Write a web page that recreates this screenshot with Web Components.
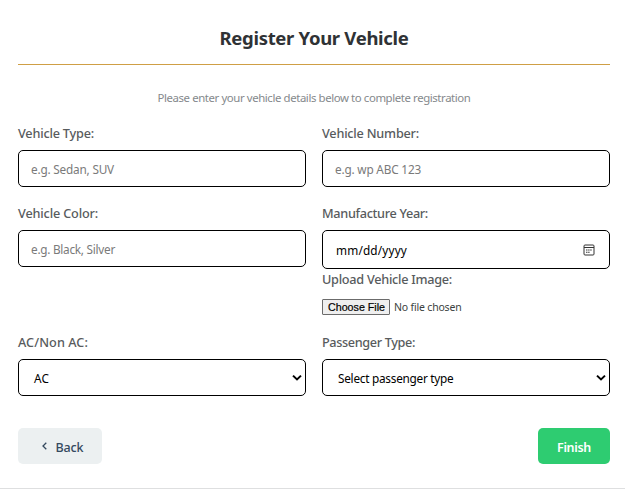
<!DOCTYPE html>
<html lang="en">
<head>
<meta charset="utf-8">
<title>Register Your Vehicle</title>
<style>
body { margin: 0; background: #fff; font-family: "Noto Sans", "Open Sans", sans-serif; }
</style>
</head>
<body>
<vehicle-form></vehicle-form>
<script>
/* Single line of text whose tracking is adjusted to a given width. */
customElements.define('fit-text', class extends HTMLElement {
  connectedCallback() {
    const root = this.attachShadow({ mode: 'open' });
    root.innerHTML = '<style>:host{display:inline-block;white-space:pre}span{display:inline-block}</style><span><slot></slot></span>';
    const span = root.querySelector('span');
    const want = parseFloat(this.getAttribute('width'));
    const have = span.getBoundingClientRect().width;
    const n = this.textContent.length;
    if (want && have) {
      span.style.letterSpacing = ((want - have) / n).toFixed(4) + 'px';
      this.style.width = want + 'px';
    }
  }
});

customElements.define('form-heading', class extends HTMLElement {
  connectedCallback() {
    this.attachShadow({ mode: 'open' }).innerHTML = `
      <style>
        :host { display: block; text-align: center; }
        h2 { margin: 0; height: 40px; padding-top: 24px; border-bottom: 1px solid #cf9f45; font: bold 18.5px/27px "Noto Sans", sans-serif; color: #2f3235; }
        p { margin: 23px 0 0; font: 11.4px/20px "Noto Sans", sans-serif; color: #85898c; }
      </style>
      <h2><fit-text width="189">Register Your Vehicle</fit-text></h2>
      <p><fit-text width="313">Please enter your vehicle details below to complete registration</fit-text></p>`;
  }
});

customElements.define('form-field', class extends HTMLElement {
  connectedCallback() {
    this.attachShadow({ mode: 'open' }).innerHTML = `
      <style>
        :host { display: block; }
        .label { display: block; height: 20px; margin-bottom: 7px; font-size: 12.7px; font-weight: 500; line-height: 20px; color: #585b5d; }
        :host([kind=file]) .label { margin-bottom: 10px; }
      </style>
      <span class="label"><fit-text width="${this.getAttribute('lw')}">${this.getAttribute('label')}</fit-text></span>
      <slot></slot>`;
  }
});

customElements.define('field-box', class extends HTMLElement {
  connectedCallback() {
    const kind = this.getAttribute('kind');
    const icon = {
      date: `<svg style="margin-right:14px" width="12" height="12" viewBox="0 0 12 12" fill="none" stroke="#333"><rect x="1" y="1" width="10" height="10" rx="1"/><path d="M1 3.5h10"/><path d="M3 6h6M3 8.2h4" stroke-width="1.1" stroke-dasharray="1.5 .6"/></svg>`,
      select: `<svg style="margin-right:3px" width="10" height="8" viewBox="0 0 10 8" fill="none" stroke="#000" stroke-width="2"><path d="M1 1.6l4 3.8 4-3.8"/></svg>`
    }[kind] || '';
    this.attachShadow({ mode: 'open' }).innerHTML = `
      <style>
        :host { box-sizing: border-box; display: flex; align-items: center; justify-content: space-between; height: 37px; padding-left: 12px; border: 1px solid #000; border-radius: 5px; background: #fff; font-size: 11.8px; line-height: 18px; color: #7a7a7a; }
        :host([kind=date]) { height: 39px; padding-left: 13px; color: #000; }
        :host([kind=select]) { padding-left: 15px; color: #000; }
        svg { display: block; flex: none; }
      </style>
      <span><slot></slot></span>${icon}`;
  }
});

customElements.define('file-picker', class extends HTMLElement {
  connectedCallback() {
    this.attachShadow({ mode: 'open' }).innerHTML = `
      <style>
        :host { display: flex; height: 16px; align-items: center; gap: 4px; font-size: 10.5px; line-height: 16px; color: #3c3f41; }
        button { box-sizing: border-box; width: 68px; height: 16px; padding: 0 0 0 1px; border: 1px solid #6b6b6b; border-radius: 1px; background: #efefef; font: 10.7px/14px "Liberation Sans", Arial, sans-serif; -webkit-text-stroke: .2px #000; color: #000; }
      </style>
      <button type="button"><fit-text width="57">Choose File</fit-text></button><fit-text width="67.5">No file chosen</fit-text>`;
  }
});

customElements.define('form-button', class extends HTMLElement {
  connectedCallback() {
    this.attachShadow({ mode: 'open' }).innerHTML = `
      <style>
        :host { display: block; }
        button { display: flex; align-items: center; justify-content: center; box-sizing: border-box; width: 72px; height: 36px; padding: 3px 0 0; border: 0; border-radius: 5px; background: #2ecc71; color: #fff; font: 600 12.5px/20px "Noto Sans", sans-serif; }
        :host([kind=back]) button { width: 84px; padding-left: 5px; gap: 9px; background: #ecf0f1; color: #34495e; font-weight: 500; }
        svg { display: block; margin-top: -4px; }
      </style>
      <button type="button">${this.getAttribute('kind') === 'back' ? '<svg width="5" height="8" viewBox="0 0 5 8" fill="none" stroke="#34495e" stroke-width="1.3"><path d="M4.3 .8L1 4l3.3 3.2"/></svg>' : ''}<slot></slot></button>`;
  }
});

customElements.define('vehicle-form', class extends HTMLElement {
  connectedCallback() {
    this.attachShadow({ mode: 'open' }).innerHTML = `
      <style>
        :host { box-sizing: border-box; display: block; width: 625px; height: 489px; padding: 0 15px 0 18px; border-bottom: 1px solid #dedfe0; overflow: hidden; }
        .grid { display: grid; grid-template-columns: 288px 288px; column-gap: 16px; row-gap: 16px; margin-top: 15px; }
        .grid > div { height: 64px; }
        .grid > .tall { height: 113px; }
        .actions { display: flex; justify-content: space-between; margin-top: 32px; }
        .grid, .actions, form-heading { width: 592px; }
      </style>
      <form-heading></form-heading>
      <div class="grid">
        <div><form-field label="Vehicle Type:" lw="76"><field-box><fit-text width="83">e.g. Sedan, SUV</fit-text></field-box></form-field></div>
        <div><form-field label="Vehicle Number:" lw="97"><field-box><fit-text width="86">e.g. wp ABC 123</fit-text></field-box></form-field></div>
        <div class="tall"><form-field label="Vehicle Color:" lw="80"><field-box><fit-text width="84">e.g. Black, Silver</fit-text></field-box></form-field></div>
        <div class="tall"><form-field label="Manufacture Year:" lw="106"><field-box kind="date"><fit-text width="71">mm/dd/yyyy</fit-text></field-box></form-field>
          <form-field kind="file" label="Upload Vehicle Image:" lw="130"><file-picker></file-picker></form-field></div>
        <div><form-field label="AC/Non AC:" lw="70"><field-box kind="select"><fit-text width="15">AC</fit-text></field-box></form-field></div>
        <div><form-field label="Passenger Type:" lw="93"><field-box kind="select"><fit-text width="115.5">Select passenger type</fit-text></field-box></form-field></div>
      </div>
      <div class="actions">
        <form-button kind="back"><fit-text width="28">Back</fit-text></form-button>
        <form-button><fit-text width="34">Finish</fit-text></form-button>
      </div>`;
  }
});
</script>
</body>
</html>
